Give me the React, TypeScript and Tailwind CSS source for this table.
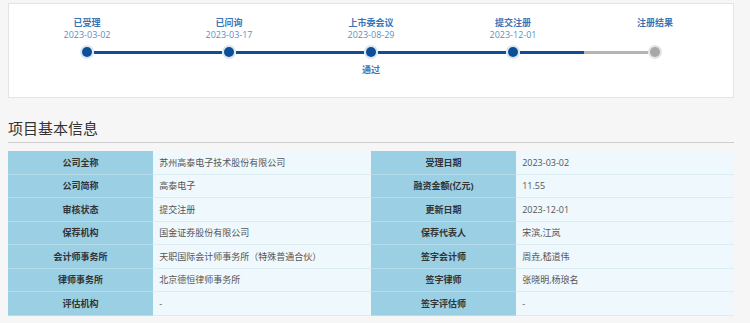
import React from 'react'

type Step = {
  title: string
  date?: string
  note?: string
  left?: 'blue' | 'gray'
  right?: 'blue' | 'gray'
  done: boolean
}

const steps: Step[] = [
  { title: '已受理', date: '2023-03-02', right: 'blue', done: true },
  { title: '已问询', date: '2023-03-17', left: 'blue', right: 'blue', done: true },
  { title: '上市委会议', date: '2023-08-29', note: '通过', left: 'blue', right: 'blue', done: true },
  { title: '提交注册', date: '2023-12-01', left: 'blue', right: 'blue', done: true },
  { title: '注册结果', left: 'gray', done: false },
]

const rows: [string, string, string, string][] = [
  ['公司全称', '苏州高泰电子技术股份有限公司', '受理日期', '2023-03-02'],
  ['公司简称', '高泰电子', '融资金额(亿元)', '11.55'],
  ['审核状态', '提交注册', '更新日期', '2023-12-01'],
  ['保荐机构', '国金证券股份有限公司', '保荐代表人', '宋滨,江岚'],
  ['会计师事务所', '天职国际会计师事务所（特殊普通合伙）', '签字会计师', '周垚,嵇道伟'],
  ['律师事务所', '北京德恒律师事务所', '签字律师', '张晓明,杨琅名'],
  ['评估机构', '-', '签字评估师', '-'],
]

function Segment({ color }: { color?: 'blue' | 'gray' }) {
  if (!color) return <div className="flex-1" />
  return (
    <div
      className={
        color === 'blue' ? 'flex-1 h-[3px] bg-[#0d4f95]' : 'flex-1 h-[3px] bg-[#b4b4b4]'
      }
    />
  )
}

function Timeline() {
  return (
    <div className="bg-white border border-[#e4e4e4] h-[95px] px-[7px] pt-[13px]">
      <div className="grid grid-cols-5">
        {steps.map((s) => (
          <div key={s.title} className="flex flex-col items-center">
            <div className="text-[9px] leading-[12px] font-bold text-[#3b74b5]">{s.title}</div>
            <div className="text-[9px] leading-[12px] h-[12px] text-[#5b8fc4]">{s.date}</div>
            <div className="w-full flex items-center h-[14px] mt-[4px]">
              <Segment color={s.left} />
              <div
                className={
                  s.done
                    ? 'w-[14px] h-[14px] rounded-full bg-[#d9e7f4] flex items-center justify-center'
                    : 'w-[14px] h-[14px] rounded-full bg-[#e4e4e4] flex items-center justify-center'
                }
              >
                <div
                  className={
                    s.done
                      ? 'w-[10px] h-[10px] rounded-full bg-[#0d4f95]'
                      : 'w-[10px] h-[10px] rounded-full bg-[#a8a8a8]'
                  }
                />
              </div>
              <Segment color={s.right} />
            </div>
            {s.note && (
              <div className="text-[9px] leading-[12px] font-bold text-[#3b74b5] mt-[5px]">
                {s.note}
              </div>
            )}
          </div>
        ))}
      </div>
    </div>
  )
}

export default function App() {
  return (
    <div
      className="w-[750px] h-[323px] overflow-hidden bg-[#f6f6f6] px-[8px] pt-[3px] pr-[16px]"
      style={{ fontFamily: '"Open Sans", "Noto Sans CJK SC", sans-serif' }}
    >
      <Timeline />
      <div className="mt-[20px] border-b border-[#cfcfcf] pb-[4px]">
        <h2 className="text-[15px] leading-[20px] text-[#333]">项目基本信息</h2>
      </div>
      <div className="mt-[8px]">
        {rows.map((r) => (
          <div key={r[0]} className="grid grid-cols-[20%_30%_20%_30%] h-[23.5px] text-[9px]">
            <div className="bg-[#9bcfe3] border-b border-[#b5dcea] flex items-center justify-center font-bold text-[#333]">
              {r[0]}
            </div>
            <div className="bg-[#eef8fd] border-b border-[#dcecf3] flex items-center pl-[6px] text-[#555]">
              {r[1]}
            </div>
            <div className="bg-[#9bcfe3] border-b border-[#b5dcea] flex items-center justify-center font-bold text-[#333]">
              {r[2]}
            </div>
            <div className="bg-[#eef8fd] border-b border-[#dcecf3] flex items-center pl-[6px] text-[#555]">
              {r[3]}
            </div>
          </div>
        ))}
      </div>
    </div>
  )
}
